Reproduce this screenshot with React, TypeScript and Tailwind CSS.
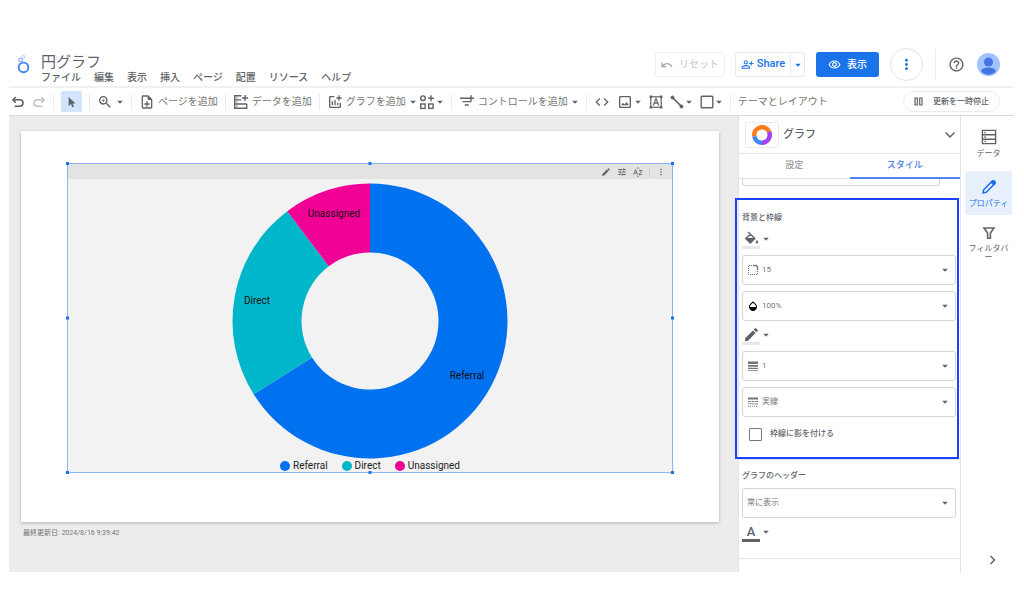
import type { ReactNode } from "react";
import {
  MdAddchart,
  MdCode,
  MdCreate,
  MdHelpOutline,
  MdMoreVert,
  MdOpacity,
  MdOutlineImage,
  MdOutlineNoteAdd,
  MdOutlinePersonAddAlt,
  MdOutlineRemoveRedEye,
  MdTune,
  MdZoomIn,
} from "react-icons/md";

const menus = ["ファイル", "編集", "表示", "挿入", "ページ", "配置", "リソース", "ヘルプ"];

const slices = [
  { name: "Referral", color: "#0072f0", from: 0, to: 237.8, x: 97, y: 58 },
  { name: "Direct", color: "#00b6cb", from: 237.8, to: 323, x: -113, y: -17 },
  { name: "Unassigned", color: "#f10096", from: 323, to: 360, x: -36, y: -104 },
];

const point = (r: number, deg: number) => {
  const a = (deg * Math.PI) / 180;
  return `${(r * Math.sin(a)).toFixed(2)} ${(-r * Math.cos(a)).toFixed(2)}`;
};

const arc = (from: number, to: number, outer: number, inner: number) => {
  const large = to - from > 180 ? 1 : 0;
  return `M${point(outer, from)}A${outer} ${outer} 0 ${large} 1 ${point(outer, to)}L${point(inner, to)}A${inner} ${inner} 0 ${large} 0 ${point(inner, from)}Z`;
};

const Caret = () => (
  <svg width="8" height="8" viewBox="0 0 8 8" fill="currentColor" className="shrink-0">
    <path d="M1.2 2.8h5.6L4 5.8z" />
  </svg>
);

const Divider = () => <span className="h-4 w-px shrink-0 bg-[#ececec]" />;

const Logo = () => (
  <svg width="14" height="20" viewBox="0 0 14 20" fill="none" stroke="#4285f4">
    <circle cx="6.5" cy="13.4" r="4.8" strokeWidth="1.9" />
    <circle cx="3.6" cy="6" r="1.8" strokeWidth="1.1" stroke="#7baaf7" />
    <circle cx="6.4" cy="2.8" r="1.5" strokeWidth="0.9" stroke="#a9c7fa" />
    <path d="M4.8 7.4 6.4 8.8" strokeWidth="1.1" stroke="#7baaf7" />
  </svg>
);

const Undo = () => (
  <svg width="14" height="14" viewBox="0 0 14 14" fill="none" stroke="currentColor" strokeWidth="1.6">
    <path d="M4.700 2 1.900 4.800l2.800 2.800M2 4.800h6.800a3.200 3.200 0 0 1 0 6.400H3.600" />
  </svg>
);

const Cursor = () => (
  <svg width="14" height="14" viewBox="0 0 14 14" fill="#5f6368">
    <path d="M3.600 2v9l2.300-2 1.500 3.200 1.600-.7L7.600 8.400h3z" />
  </svg>
);

const AddData = () => (
  <svg width="16" height="16" viewBox="0 0 16 16" fill="none" stroke="#5f6368" strokeWidth="1.4">
    <path d="M8.5 1.7H1.7v12.6h12V9.8M1.7 5.9h6.5M1.7 10h12M12 1v6M9 4h6M3.5 3.8h1M3.5 8h1M3.5 12.2h1" />
  </svg>
);

const AddBlock = () => (
  <svg width="16" height="16" viewBox="0 0 16 16" fill="none" stroke="#5f6368" strokeWidth="1.4">
    <circle cx="4" cy="4.2" r="2.3" />
    <rect x="1.7" y="10" width="4.4" height="4.4" />
    <rect x="9.7" y="10" width="4.4" height="4.4" />
    <path d="M12 1.2v6M9 4.2h6" />
  </svg>
);

const AddControl = () => (
  <svg width="16" height="16" viewBox="0 0 16 16" fill="none" stroke="#5f6368" strokeWidth="1.4">
    <path d="M1 4.300h8M3.400 7.600h9M5.800 11h4M12 1.300v6M9 4.300h6" />
  </svg>
);

const TextBox = () => (
  <svg width="14" height="14" viewBox="0 0 14 14" fill="none" stroke="#5f6368" strokeWidth="1.2">
    <rect x="1.8" y="1.8" width="10.4" height="10.4" />
    <path d="M4.2 10.4 7 3.6l2.8 6.8M5.2 8.2h3.6" />
    <path d="M.6 1.8h2.4M11 1.8h2.4M.6 12.2h2.4M11 12.2h2.4" strokeWidth="2.4" />
  </svg>
);

const Line = () => (
  <svg width="14" height="14" viewBox="0 0 14 14" stroke="#5f6368" fill="#5f6368">
    <path d="M2.5 2.5l9 9" strokeWidth="1.7" />
    <circle cx="2.5" cy="2.5" r="1.5" />
    <circle cx="11.5" cy="11.5" r="1.5" />
  </svg>
);

const Square = () => (
  <svg width="14" height="14" viewBox="0 0 14 14" fill="none" stroke="#5f6368" strokeWidth="1.4">
    <rect x="1.2" y="1.2" width="11.6" height="11.6" rx="0.8" />
  </svg>
);

const Pause = () => (
  <svg width="9" height="9" viewBox="0 0 9 9" fill="none" stroke="#5f6368" strokeWidth="1.2">
    <path d="M1 1h2.300v7H1zM5.700 1H8v7H5.700z" />
  </svg>
);

const Sort = () => (
  <svg width="10" height="10" viewBox="0 0 10 10" fill="none" stroke="#5f6368" strokeWidth="0.9">
    <path d="M.6 7.600 2.600 2.600l2 5M1.300 6h2.600M6 3.400h3L6 7.400h3.200M4 1.600 5 .6l1 1M4 8.600l1 1 1-1" />
  </svg>
);

const Avatar = () => (
  <svg width="23" height="23" viewBox="0 0 23 23">
    <circle cx="11.5" cy="11.5" r="11.5" fill="#a0c3ff" />
    <circle cx="11.5" cy="9" r="4.5" fill="#4374e0" />
    <path d="M4 18.2c1-2.600 4.200-3.600 7.500-3.600s6.500 1 7.500 3.600c-1.800 2.200-4.400 3.500-7.500 3.500s-5.700-1.300-7.500-3.500z" fill="#4374e0" />
  </svg>
);

const Rows = () => (
  <svg width="16" height="16" viewBox="0 0 16 16" fill="none" stroke="#5f6368" strokeWidth="1.4">
    <path d="M1.400 1.400h13.200v13.200H1.400zM1.400 5.800h13.200M1.400 10.200h13.200M3.400 3.600h1.500M3.400 8h1.500M3.400 12.400h1.500" />
  </svg>
);

const PencilOutline = () => (
  <svg width="16" height="16" viewBox="0 0 16 16" fill="none" stroke="#1a73e8" strokeWidth="1.5" strokeLinejoin="round">
    <path d="M2 14l.7-3.300L11 2.400c1.600-1.200 3.600.8 2.500 2.500L5.300 13.200z" />
    <path d="M10.200 3.200 12.800 5.800 14 4.400c.6-1.600-.9-3-2.400-2.400z" fill="#1a73e8" />
  </svg>
);

const Funnel = () => (
  <svg width="16" height="16" viewBox="0 0 16 16" fill="none" stroke="#5f6368" strokeWidth="1.6">
    <path d="M3 3h10L9.400 8v5.200H6.600V8z" />
  </svg>
);

const PaintBucket = () => (
  <svg width="15" height="15" viewBox="0 0 15 15" fill="none" stroke="#5f6368">
    <path d="M4 1l6.800 6.500-4.600 4.600L1.800 7.600 6.400 3.200" strokeWidth="1.400" strokeLinejoin="round" />
    <path d="M2 7.500h8.700L6.200 12z" fill="#5f6368" />
    <path d="M12.900 8.800c1.800 2.500 1.400 3.700 0 3.700s-1.800-1.200 0-3.700z" fill="#5f6368" stroke="none" />
  </svg>
);

const Corner = () => (
  <svg width="12" height="12" viewBox="0 0 12 12" fill="none" stroke="#757575">
    <path d="M6 1.500h2.500a2 2 0 0 1 2 2V6" strokeWidth="1.300" />
    <path d="M5 1.500H1.500v9h9V6" strokeDasharray="1 1" />
  </svg>
);

const LineWeight = () => (
  <svg width="12" height="12" viewBox="0 0 12 12" fill="#757575">
    <path d="M1 1.500h10v2.500H1zM1 5h10v1.800H1zM1 7.800h10v1.300H1zM1 10h10v.8H1z" />
  </svg>
);

const LineStyle = () => (
  <svg width="12" height="12" viewBox="0 0 12 12" fill="none" stroke="#757575">
    <path d="M1 2.500h10" strokeWidth="2" />
    <path d="M1 5.500h10" strokeDasharray="2.800 .8" />
    <path d="M1 7.800h10" strokeDasharray="1.600 .5" />
    <path d="M1 10.200h10" strokeDasharray="1 1" />
  </svg>
);

const Chevron = ({ d }: { d: string }) => (
  <svg width="12" height="12" viewBox="0 0 12 12" fill="none" stroke="#5f6368" strokeWidth="1.500">
    <path d={d} />
  </svg>
);

const DonutIcon = () => (
  <svg width="20" height="20" viewBox="-10 -10 20 20">
    <path d={arc(-100, 65, 10, 5.500)} fill="#fa7b17" />
    <path d={arc(65, 180, 10, 5.500)} fill="#a142f4" />
    <path d={arc(180, 260, 10, 5.500)} fill="#4285f4" />
  </svg>
);

const ToolButton = ({ icon, label, caret }: { icon: ReactNode; label: string; caret?: boolean }) => (
  <button aria-label={label} className="flex items-center gap-px">
    {icon}
    {caret && <Caret />}
  </button>
);

const AddButton = ({ icon, text, caret }: { icon: ReactNode; text: string; caret?: boolean }) => (
  <button className="flex items-center gap-[3px] whitespace-nowrap text-[10px]">
    {icon}
    <span className="text-[#757575]">{text}</span>
    {caret && <Caret />}
  </button>
);

const Field = ({ icon, label, value }: { icon?: ReactNode; label: string; value: string }) => (
  <div className="flex h-[30px] items-center gap-[3px] rounded-[3px] border border-[#d5d5d5] pl-1 pr-1.5">
    {icon}
    <select aria-label={label} className="min-w-0 flex-1 appearance-none bg-transparent text-[8px] text-[#757575]">
      <option>{value}</option>
    </select>
    <Caret />
  </div>
);

const ColorButton = ({ icon, label, dark }: { icon: ReactNode; label: string; dark?: boolean }) => (
  <button aria-label={label} className="flex h-[18px] items-start gap-0.5 self-start">
    <span className="flex w-[18px] flex-col items-center">
      <span className="flex h-[15px] items-center">{icon}</span>
      <span className={dark ? "h-[3px] w-full bg-[#5f6368]" : "h-[3px] w-full bg-[#e8e8e8]"} />
    </span>
    <span className="mt-1"><Caret /></span>
  </button>
);

const Header = () => (
  <header className="flex h-10 items-start border-b-2 border-[#f1f1f1] pl-2 pr-3.5">
    <div className="mt-1.5"><Logo /></div>
    <div className="ml-2.5 pt-1.5">
      <h1 className="text-[15px] leading-4 text-[#5f6368]">円グラフ</h1>
      <nav className="flex gap-[13px] whitespace-nowrap text-[10px] leading-4 font-medium text-[#5f6368]">
        {menus.map((m) => <button key={m}>{m}</button>)}
      </nav>
    </div>
    <div className="ml-auto flex h-[33px] shrink-0 items-center">
      <button disabled className="flex h-[25px] w-[70px] items-center justify-center gap-1.5 rounded-[3px] border border-[#efefef] text-[10px] text-[#c4c4c4]">
        <svg width="12" height="10" viewBox="0 0 12 10" fill="none" stroke="#a8a8a8" strokeWidth="1.300">
          <path d="M1 2.500v4h4M1.500 6C4 2.800 8.500 2.800 11 7" />
        </svg>
        リセット
      </button>
      <div className="ml-2.5 flex h-[25px] w-[70px] rounded-[3px] border border-[#e8eaed] text-[#1a73e8]">
        <button className="flex flex-1 items-center justify-center gap-[3px] text-[11px] font-medium">
          <MdOutlinePersonAddAlt size={13} className="shrink-0" />
          Share
        </button>
        <button aria-label="Share options" className="flex w-3.5 items-center justify-center border-l border-[#e8eaed]">
          <Caret />
        </button>
      </div>
      <button className="ml-[11px] flex h-[25px] w-[63px] items-center justify-center gap-1.5 rounded-[3px] bg-[#1a73e8] text-[10px] font-medium text-white">
        <MdOutlineRemoveRedEye size={13} />
        表示
      </button>
      <button aria-label="その他" className="ml-[11px] flex size-[33px] items-center justify-center rounded-full border border-[#e3e3e3] text-[#1a73e8]">
        <MdMoreVert size={17} />
      </button>
      <span className="ml-3 h-[31px] w-px bg-[#ececec]" />
      <button aria-label="ヘルプ" className="ml-3 text-[#5f6368]"><MdHelpOutline size={17} /></button>
      <button aria-label="アカウント" className="ml-3"><Avatar /></button>
    </div>
  </header>
);

const Toolbar = () => (
  <div className="flex h-7 items-center gap-[7px] border-b border-[#d9d9d9] pl-0.5 pr-3.5 text-[#5f6368]">
    <ToolButton label="元に戻す" icon={<Undo />} />
    <ToolButton label="やり直す" icon={<span className="-scale-x-100 text-[#c4c4c4]"><Undo /></span>} />
    <Divider />
    <button aria-label="選択" className="flex size-[21px] shrink-0 items-center justify-center rounded-[2px] bg-[#d2e3fc]"><Cursor /></button>
    <Divider />
    <ToolButton label="ズーム" icon={<MdZoomIn size={16} className="mr-0.5" />} caret />
    <Divider />
    <AddButton icon={<MdOutlineNoteAdd size={16} />} text="ページを追加" />
    <Divider />
    <AddButton icon={<AddData />} text="データを追加" />
    <Divider />
    <div className="flex items-center gap-0.5">
      <AddButton icon={<MdAddchart size={16} />} text="グラフを追加" caret />
      <ToolButton label="コミュニティ" icon={<AddBlock />} caret />
    </div>
    <Divider />
    <AddButton icon={<AddControl />} text="コントロールを追加" caret />
    <Divider />
    <ToolButton label="埋め込み" icon={<MdCode size={16} />} />
    <ToolButton label="画像" icon={<MdOutlineImage size={16} />} caret />
    <ToolButton label="テキスト" icon={<TextBox />} />
    <ToolButton label="線" icon={<Line />} caret />
    <ToolButton label="図形" icon={<Square />} caret />
    <Divider />
    <button className="whitespace-nowrap text-[10px] text-[#757575]">テーマとレイアウト</button>
    <button className="ml-auto flex h-[21px] items-center gap-2.5 whitespace-nowrap rounded-full border border-[#ececec] px-2.5 text-[8px] font-medium">
      <Pause />
      更新を一時停止
    </button>
  </div>
);

const handles = [
  "-left-0.5 -top-0.5",
  "left-1/2 -translate-x-1/2 -top-0.5",
  "-right-0.5 -top-0.5",
  "-left-0.5 top-1/2 -translate-y-1/2",
  "-right-0.5 top-1/2 -translate-y-1/2",
  "-left-0.5 -bottom-0.5",
  "left-1/2 -translate-x-1/2 -bottom-0.5",
  "-right-0.5 -bottom-0.5",
];

const Chart = () => (
  <div className="relative border border-[#8ab4f8] bg-[#f2f2f2]">
    <div className="flex h-[15px] items-center justify-end gap-1.5 bg-[#e3e3e3] pr-1.5 text-[#5f6368]">
      <button aria-label="編集"><MdCreate size={10} /></button>
      <button aria-label="調整"><MdTune size={10} /></button>
      <button aria-label="並べ替え"><Sort /></button>
      <span className="h-2.5 w-px bg-[#d0d0d0]" />
      <button aria-label="メニュー"><MdMoreVert size={10} /></button>
    </div>
    <svg viewBox="-138 -138 276 276" className="mx-auto mt-1 block h-[276px]" role="img" aria-label="円グラフ">
      {slices.map((s) => <path key={s.name} d={arc(s.from, s.to, 137.5, 68.5)} fill={s.color} />)}
      {slices.map((s) => (
        <text key={s.name} x={s.x} y={s.y} fontSize="10" textAnchor="middle" fill="#111111">{s.name}</text>
      ))}
    </svg>
    <ul className="flex h-[13px] items-center justify-center gap-3.5 text-[10px] text-[#212121]">
      {slices.map((s) => (
        <li key={s.name} className="flex items-center gap-[3px]">
          <span className="size-2.5 rounded-full" style={{ backgroundColor: s.color }} />
          {s.name}
        </li>
      ))}
    </ul>
    {handles.map((h) => <span key={h} className={`absolute size-[3px] bg-[#1a73e8] ${h}`} />)}
  </div>
);

const Canvas = () => (
  <main className="min-w-0 flex-1 bg-[#ececec] pl-3 pr-[19px] pt-[15px]">
    <div className="bg-white px-[46px] pb-[49px] pt-8 shadow-[0_1px_3px_rgba(0,0,0,0.25)]">
      <Chart />
    </div>
    <p className="mt-[5px] px-0.5 text-[7px] leading-3 text-[#757575]">最終更新日: 2024/8/16 9:39:42</p>
  </main>
);

const StylePanel = () => (
  <aside className="w-[223px] shrink-0 border-x border-[#e3e3e3] text-[#5f6368]">
    <div className="flex h-[38px] items-center border-b border-[#e3e3e3] pl-1.5 pr-1">
      <span className="flex h-[26px] w-[34px] items-center justify-center rounded-[2px] border border-[#ececec]"><DonutIcon /></span>
      <h2 className="ml-1 pt-0.5 text-[11px] font-medium">グラフ</h2>
      <button aria-label="閉じる" className="ml-auto"><Chevron d="M1.500 3.500 6 8l4.500-4.500" /></button>
    </div>
    <div role="tablist" className="grid h-[25px] grid-cols-2 text-[9px]">
      <button role="tab" aria-selected={false} className="border-b border-[#e3e3e3] text-[#8a8a8a]">設定</button>
      <button role="tab" aria-selected className="border-b-2 border-[#5086ec] font-medium text-[#4a80e8]">スタイル</button>
    </div>
    <div className="ml-[3px] mr-5 h-[7px] rounded-b-[3px] border border-t-0 border-[#d5d5d5]" />
    <section className="relative mt-3 flex flex-col gap-1.5 border-b border-[#e3e3e3] pb-3.5 pl-[3px] pr-1 pt-[13px]">
      <span className="pointer-events-none absolute -left-1 bottom-0 right-px top-0 border-2 border-[#1a43ff]" />
      <h3 className="text-[8px] leading-[14px] font-medium">背景と枠線</h3>
      <ColorButton label="背景色" icon={<PaintBucket />} />
      <Field label="角の丸み" value="15" icon={<Corner />} />
      <Field label="不透明度" value="100%" icon={<MdOpacity size={12} className="text-black" />} />
      <ColorButton label="枠線の色" icon={<MdCreate size={17} />} />
      <Field label="枠線の太さ" value="1" icon={<LineWeight />} />
      <Field label="枠線のスタイル" value="実線" icon={<LineStyle />} />
      <label className="flex h-[22px] items-center gap-2 pl-[7px] text-[8px] font-medium">
        <input type="checkbox" className="size-[13px] appearance-none rounded-[1px] border border-[#757575]" />
        枠線に影を付ける
      </label>
    </section>
    <section className="flex flex-col gap-1.5 border-b border-[#e3e3e3] pb-4 pl-[3px] pr-1 pt-2.5">
      <h3 className="text-[8px] leading-3 font-medium">グラフのヘッダー</h3>
      <Field label="グラフのヘッダー" value="常に表示" />
      <ColorButton label="文字色" dark icon={<span className="text-[13px] leading-none font-medium">A</span>} />
    </section>
  </aside>
);

const Rail = () => (
  <div className="flex w-[53px] shrink-0 flex-col items-center pl-1 pr-0.5 pt-[13px] text-[8px] leading-[9px] text-[#5f6368]">
    <button className="flex flex-col items-center gap-1"><Rows />データ</button>
    <button className="mt-[13px] flex h-11 w-full flex-col items-center justify-center gap-1 rounded-[2px] bg-[#e8f0fe] text-[#1a73e8]">
      <PencilOutline />
      プロパティ
    </button>
    <button className="mt-2.5 flex w-full flex-col items-center gap-[3px]">
      <Funnel />
      <span className="w-10">フィルタバー</span>
    </button>
    <button aria-label="折りたたむ" className="mb-1.5 ml-2 mt-auto"><Chevron d="M3.500 2 7.500 6l-4 4" /></button>
  </div>
);

const App = () => (
  <div className="flex min-h-screen flex-col bg-white pb-[42px] pl-[9px] pr-2.5 pt-12 font-[Roboto,'Noto_Sans_CJK_JP',sans-serif]">
    <Header />
    <Toolbar />
    <div className="flex flex-1">
      <Canvas />
      <StylePanel />
      <Rail />
    </div>
  </div>
);

export default App;
